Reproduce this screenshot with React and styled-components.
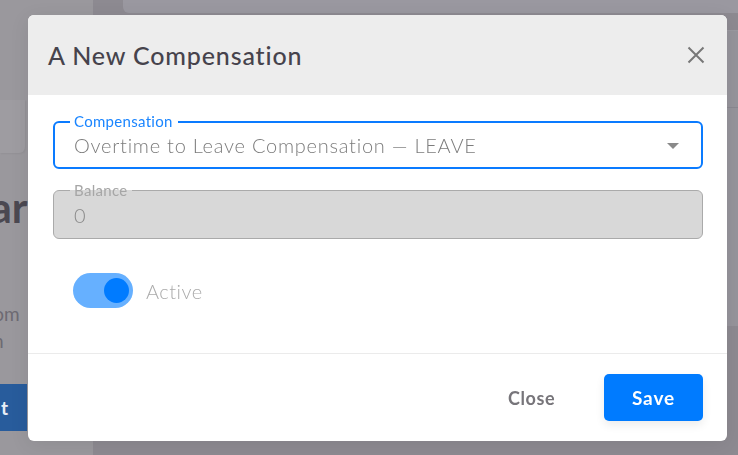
import React, { useState } from 'react';
import styled, { createGlobalStyle } from 'styled-components';

const GlobalStyle = createGlobalStyle`
  html, body {
    margin: 0;
    padding: 0;
    height: 100%;
    overflow: hidden;
  }
  body {
    font-family: "Lato", "Noto Sans", sans-serif;
    background: #8d8a91;
  }
`;

const Page = styled.div`
  display: flex;
  width: 738px;
  height: 455px;
  background: #8d8a91;
  overflow: hidden;
`;

const SideColumn = styled.div`
  width: 93px;
  flex-shrink: 0;
  background: #9a989d;
  overflow: hidden;
  display: flex;
  flex-direction: column;
  padding-top: 100px;
  box-sizing: border-box;
`;

const MiniCard = styled.div`
  width: 25px;
  height: 53px;
  background: #9e9ca1;
  border-radius: 0 0 6px 0;
  box-shadow: 1px 1px 2px rgba(0, 0, 0, 0.05);
`;

const BgHeading = styled.div`
  margin: 30px 0 0 -139px;
  font-size: 42px;
  font-weight: 700;
  color: #4b4851;
  white-space: nowrap;
  line-height: 48px;
`;

const BgText = styled.div`
  margin-left: ${p => p.$shift}px;
  font-size: 19px;
  color: #6d6a72;
  white-space: nowrap;
  line-height: 27px;
  margin-top: ${p => p.$top || 0}px;
`;

const BgButton = styled.div`
  margin: 30px 0 0 -60px;
  width: 87px;
  height: 47px;
  background: #285c9c;
  color: #e8eef6;
  font-weight: 700;
  font-size: 19px;
  display: flex;
  align-items: center;
  justify-content: flex-end;
  padding-right: 19px;
  box-sizing: border-box;
`;

const MainArea = styled.div`
  flex: 1;
  display: flex;
  flex-direction: column;
  padding-left: 30px;
`;

const TopCard = styled.div`
  height: 13px;
  background: #9a98a0;
  border-radius: 0 0 0 6px;
`;

const RightStrip = styled.div`
  align-self: flex-end;
  width: 11px;
  margin-top: 17px;
  height: 295px;
  background: #96949b;
  border-top: 1px solid #9b99a0;
  display: flex;
  flex-direction: column;
`;

const StripLine = styled.div`
  height: 1px;
  margin-top: 76px;
  background: #8a8890;
`;

const Overlay = styled.div`
  position: fixed;
  inset: 0;
  display: flex;
  align-items: flex-start;
  padding: 15px 0 0 28px;
`;

const Modal = styled.div`
  width: 699px;
  height: 426px;
  background: #fff;
  border-radius: 6px;
  overflow: hidden;
  display: flex;
  flex-direction: column;
  box-shadow: 0 4px 20px rgba(0, 0, 0, 0.08);
`;

const Header = styled.div`
  height: 80px;
  flex-shrink: 0;
  background: #ededed;
  display: flex;
  align-items: center;
  justify-content: space-between;
  padding: 0 20px;
`;

const Title = styled.h2`
  margin: 0;
  font-size: 25px;
  font-weight: 500;
  color: #46434c;
  letter-spacing: 0.85px;
`;

const CloseIcon = styled.button`
  border: none;
  background: none;
  padding: 0;
  width: 22px;
  height: 22px;
  display: flex;
  align-items: center;
  justify-content: center;
  cursor: pointer;
`;

const Body = styled.div`
  flex: 1;
  padding: 26px 24px 0 25px;
  display: flex;
  flex-direction: column;
`;

const Field = styled.div`
  position: relative;
  height: ${p => p.$height}px;
  box-sizing: border-box;
  border-radius: 6px;
  border: ${p => (p.$focused ? '2px solid #0a7bff' : '1px solid #aaaaaa')};
  background: ${p => (p.$disabled ? '#d8d8d8' : '#fff')};
  padding: 0 ${p => (p.$focused ? 19 : 20)}px;
  margin-top: ${p => p.$top || 0}px;
  display: flex;
  align-items: center;
`;

const FieldLabel = styled.span`
  position: absolute;
  left: ${p => (p.$focused ? 15 : 16)}px;
  top: ${p => (p.$focused ? -10 : -9)}px;
  padding: 0 5px 0 4px;
  font-size: 15px;
  line-height: 16px;
  color: ${p => (p.$focused ? '#1a85ff' : '#a6a6a6')};
  letter-spacing: 0.3px;
  background: ${p => (p.$disabled ? 'linear-gradient(#fff 50%, #d8d8d8 50%)' : '#fff')};
`;

const Value = styled.div`
  flex: 1;
  font-size: 20px;
  font-weight: 300;
  color: ${p => (p.$disabled ? '#8a8a8a' : '#7c7c7c')};
  letter-spacing: 0.75px;
  white-space: nowrap;
`;

const Caret = styled.span`
  width: 0;
  height: 0;
  border-left: 6px solid transparent;
  border-right: 6px solid transparent;
  border-top: 6px solid #8a8a8a;
  margin: 1px 3px 0 0;
`;

const ToggleRow = styled.label`
  display: flex;
  align-items: center;
  gap: 13px;
  margin: 34px 0 0 20px;
  cursor: pointer;
`;

const Track = styled.span`
  width: 60px;
  height: 35px;
  border-radius: 18px;
  background: ${p => (p.$on ? '#66b0ff' : '#cfcfcf')};
  display: flex;
  align-items: center;
  justify-content: ${p => (p.$on ? 'flex-end' : 'flex-start')};
  padding: 0 4px;
  box-sizing: border-box;
`;

const Knob = styled.span`
  width: 25px;
  height: 25px;
  border-radius: 50%;
  background: ${p => (p.$on ? '#007bff' : '#fff')};
`;

const ToggleLabel = styled.span`
  font-size: 20px;
  font-weight: 300;
  color: #ababab;
  letter-spacing: 0.5px;
`;

const Footer = styled.div`
  height: 88px;
  flex-shrink: 0;
  border-top: 1px solid #ebebeb;
  display: flex;
  align-items: center;
  justify-content: flex-end;
  gap: 23px;
  padding: 0 24px 0 0;
  box-sizing: border-box;
`;

const Button = styled.button`
  width: 99px;
  height: 47px;
  border: none;
  border-radius: 5px;
  font-family: inherit;
  font-size: ${p => (p.$primary ? 19 : 18)}px;
  font-weight: 700;
  letter-spacing: ${p => (p.$primary ? 0.9 : 0.6)}px;
  cursor: pointer;
  background: ${p => (p.$primary ? '#007bff' : 'transparent')};
  color: ${p => (p.$primary ? '#fff' : '#77757a')};
  box-shadow: ${p => (p.$primary ? '0 4px 10px rgba(0, 0, 0, 0.08)' : 'none')};
`;

export default function App() {
  const [active, setActive] = useState(true);

  return (
    <>
      <GlobalStyle />
      <Page>
        <SideColumn>
          <MiniCard />
          <BgHeading>Calendar</BgHeading>
          <BgText $shift={-20} $top={69}>from</BgText>
          <BgText $shift={-12}>m</BgText>
          <BgButton>t</BgButton>
        </SideColumn>
        <MainArea>
          <TopCard />
          <RightStrip>
            <StripLine />
          </RightStrip>
        </MainArea>
      </Page>

      <Overlay>
        <Modal>
          <Header>
            <Title>A New Compensation</Title>
            <CloseIcon aria-label="close">
              <svg width="20" height="20" viewBox="0 0 20 20">
                <path d="M2.5 2.5 L17.5 17.5 M17.5 2.5 L2.5 17.5" stroke="#777" strokeWidth="2" />
              </svg>
            </CloseIcon>
          </Header>

          <Body>
            <Field $focused $height={48}>
              <FieldLabel $focused>Compensation</FieldLabel>
              <Value>Overtime to Leave Compensation — LEAVE</Value>
              <Caret />
            </Field>

            <Field $disabled $height={49} $top={21}>
              <FieldLabel $disabled>Balance</FieldLabel>
              <Value $disabled>0</Value>
            </Field>

            <ToggleRow onClick={() => setActive(a => !a)}>
              <Track $on={active}>
                <Knob $on={active} />
              </Track>
              <ToggleLabel>Active</ToggleLabel>
            </ToggleRow>
          </Body>

          <Footer>
            <Button>Close</Button>
            <Button $primary>Save</Button>
          </Footer>
        </Modal>
      </Overlay>
    </>
  );
}
